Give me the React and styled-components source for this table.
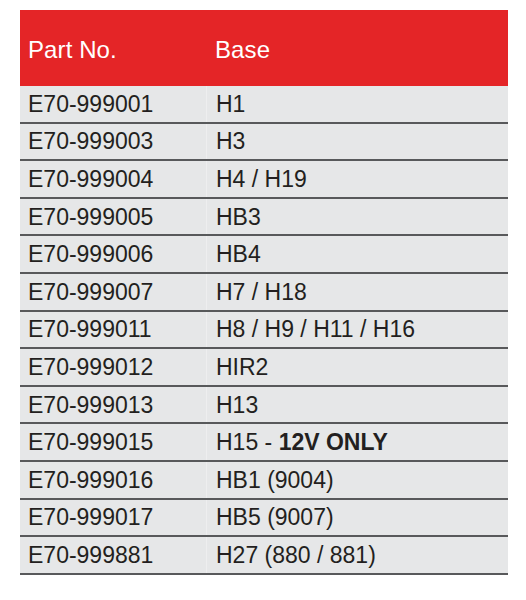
import React from 'react';
import styled, { createGlobalStyle } from 'styled-components';

const rows = [
    ['E70-999001', 'H1'],
    ['E70-999003', 'H3'],
    ['E70-999004', 'H4 / H19'],
    ['E70-999005', 'HB3'],
    ['E70-999006', 'HB4'],
    ['E70-999007', 'H7 / H18'],
    ['E70-999011', 'H8 / H9 / H11 / H16'],
    ['E70-999012', 'HIR2'],
    ['E70-999013', 'H13'],
    ['E70-999015', 'H15 - ', '12V ONLY'],
    ['E70-999016', 'HB1 (9004)'],
    ['E70-999017', 'HB5 (9007)'],
    ['E70-999881', 'H27 (880 / 881)'],
];

const App = () => {
    return (
        <>
            <Global />
            <S.Page>
                <S.Table>
                    <S.Head>
                        <S.HeadCell>Part No.</S.HeadCell>
                        <S.HeadCell $second>Base</S.HeadCell>
                    </S.Head>
                    {rows.map(([part, base, note]) => (
                        <S.Row key={part}>
                            <S.Cell>{part}</S.Cell>
                            <S.Cell $second>
                                {base}
                                {note && <strong>{note}</strong>}
                            </S.Cell>
                        </S.Row>
                    ))}
                </S.Table>
            </S.Page>
        </>
    );
};

const Global = createGlobalStyle`
    body {
        margin: 0;
        background: #fff;
        font-family: "Liberation Sans", Arial, sans-serif;
    }
`;

const S = {
    Page: styled.div`
        width: 526px;
        height: 600px;
        padding: 10px 18px 0 20px;
        box-sizing: border-box;
    `,
    Table: styled.div`
        width: 488px;
        display: flex;
        flex-direction: column;
    `,
    Head: styled.div`
        display: grid;
        grid-template-columns: 186px 1fr;
        height: 76px;
        background: #e42527;
        color: #fff;
    `,
    HeadCell: styled.div`
        display: flex;
        align-items: center;
        padding: 4px 0 0 ${({ $second }) => ($second ? '9px' : '8px')};
        font-size: 24px;
        letter-spacing: 0.1px;
    `,
    Row: styled.div`
        display: grid;
        grid-template-columns: 186px 1fr;
        height: 37.6px;
        box-sizing: border-box;
        background: #e6e7e8;
        border-bottom: 2px solid #58595b;
    `,
    Cell: styled.div`
        display: flex;
        align-items: center;
        padding-left: ${({ $second }) => ($second ? '9px' : '8px')};
        padding-top: 1px;
        font-size: 23px;
        color: #231f20;
        white-space: pre;
        ${({ $second }) => ($second ? 'border-left: 1px solid #eeeeef;' : '')}
        & > strong {
            font-weight: bold;
        }
    `,
};

export default App;
